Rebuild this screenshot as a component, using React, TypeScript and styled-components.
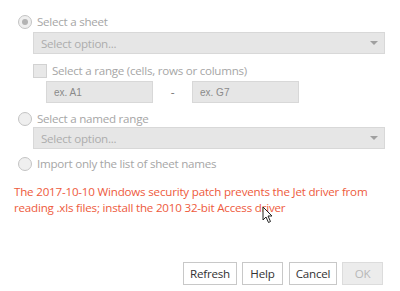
import React from "react";
import styled, { createGlobalStyle } from "styled-components";

const Global = createGlobalStyle`
  html, body { margin: 0; padding: 0; background: #ffffff; }
  body { font-family: "Open Sans", "Noto Sans", sans-serif; }
`;

const Page = styled.div`
  width: 400px;
  height: 291px;
  box-sizing: border-box;
  padding: 14px 17px 0 18px;
  display: flex;
  flex-direction: column;
  font-size: 11.6px;
  letter-spacing: -0.25px;
  color: #a6a6a6;
`;

const OptionRow = styled.label<{ $mt?: number }>`
  display: flex;
  align-items: center;
  gap: 5px;
  height: 15px;
  margin-top: ${(p) => p.$mt ?? 0}px;
`;

const Radio = styled.span<{ $checked?: boolean }>`
  width: 12px;
  height: 12px;
  border-radius: 50%;
  border: 1px solid #c4c4c4;
  background: #efefef;
  display: flex;
  align-items: center;
  justify-content: center;
  flex: none;
  &::after {
    content: "";
    display: ${(p) => (p.$checked ? "block" : "none")};
    width: 6px;
    height: 6px;
    border-radius: 50%;
    background: #b3b3b3;
  }
`;

const Check = styled.span`
  width: 12px;
  height: 12px;
  border: 1px solid #d2d2d2;
  background: #e8e8e8;
  flex: none;
`;

const Indent = styled.div<{ $mt?: number; $ml?: number }>`
  margin-left: ${(p) => p.$ml ?? 15}px;
  margin-top: ${(p) => p.$mt ?? 0}px;
`;

const SelectBox = styled.div`
  height: 20px;
  width: 350px;
  box-sizing: content-box;
  border: 1px solid #d8d8d8;
  background: #e6e6e6;
  display: flex;
  align-items: center;
  justify-content: space-between;
  color: #adadad;
  span { padding-left: 7px; }
  svg { margin-right: 6px; }
`;

const RangeRow = styled.div`
  display: flex;
  align-items: center;
  margin-left: 28px;
  margin-top: 3px;
`;

const Input = styled.div`
  width: 98px;
  height: 20px;
  border: 1px solid #d8d8d8;
  background: #e6e6e6;
  display: flex;
  align-items: center;
  padding-left: 7px;
  box-sizing: content-box;
  font-family: "Liberation Sans", Arial, sans-serif;
  font-size: 10px;
  letter-spacing: 0;
  color: #8a8a8a;
`;

const Dash = styled.span`
  width: 39px;
  text-align: center;
  color: #808080;
  font-size: 12px;
`;

const ErrorText = styled.p`
  margin: 13px 0 0 -4px;
  font-size: 11.6px;
  letter-spacing: -0.2px;
  line-height: 16px;
  color: #ee5a3c;
  width: 372px;
`;

const Buttons = styled.div`
  margin-top: auto;
  margin-bottom: 6px;
  display: flex;
  justify-content: flex-end;
  gap: 5px;
`;

const Button = styled.button<{ $w: number; $disabled?: boolean; $ml?: number }>`
  width: ${(p) => p.$w}px;
  height: 23px;
  box-sizing: border-box;
  margin-left: ${(p) => p.$ml ?? 0}px;
  background: ${(p) => (p.$disabled ? "#ececec" : "#ffffff")};
  border: 1px solid ${(p) => (p.$disabled ? "#dcdcdc" : "#c8c8c8")};
  color: ${(p) => (p.$disabled ? "#b8b8b8" : "#333333")};
  font-family: "Open Sans", "Noto Sans", sans-serif;
  font-size: 11.6px;
  letter-spacing: -0.2px;
  padding: 0;
`;

const Caret = () => (
  <svg width="8" height="4" viewBox="0 0 8 4">
    <path d="M0 0 H8 L4 4 Z" fill="#a0a0a0" />
  </svg>
);

const Cursor = styled.svg`
  position: absolute;
  left: 262px;
  top: 206px;
`;

export default function App() {
  return (
    <>
      <Global />
      <Page>
        <OptionRow>
          <Radio $checked />
          Select a sheet
        </OptionRow>
        <Indent $mt={3}>
          <SelectBox>
            <span>Select option...</span>
            <Caret />
          </SelectBox>
        </Indent>
        <Indent $mt={9}>
          <OptionRow>
            <Check />
            Select a range (cells, rows or columns)
          </OptionRow>
        </Indent>
        <RangeRow>
          <Input>ex. A1</Input>
          <Dash>-</Dash>
          <Input>ex. G7</Input>
        </RangeRow>
        <OptionRow $mt={8}>
          <Radio />
          Select a named range
        </OptionRow>
        <Indent $mt={1}>
          <SelectBox>
            <span>Select option...</span>
            <Caret />
          </SelectBox>
        </Indent>
        <OptionRow $mt={7}>
          <Radio />
          Import only the list of sheet names
        </OptionRow>
        <ErrorText>
          The 2017-10-10 Windows security patch prevents the Jet driver from
          reading .xls files; install the 2010 32-bit Access driver
        </ErrorText>
        <Buttons>
          <Button $w={54}>Refresh</Button>
          <Button $w={41}>Help</Button>
          <Button $w={48} $ml={1}>
            Cancel
          </Button>
          <Button $w={41} $disabled>
            OK
          </Button>
        </Buttons>
      </Page>
      <Cursor width="12" height="18" viewBox="0 0 12 18">
        <path
          d="M1 1 L1 14 L4 11 L6.5 16.5 L8.5 15.5 L6 10 L10 10 Z"
          fill="#ffffff"
          stroke="#222"
          strokeWidth="1"
          strokeLinejoin="round"
        />
      </Cursor>
    </>
  );
}
